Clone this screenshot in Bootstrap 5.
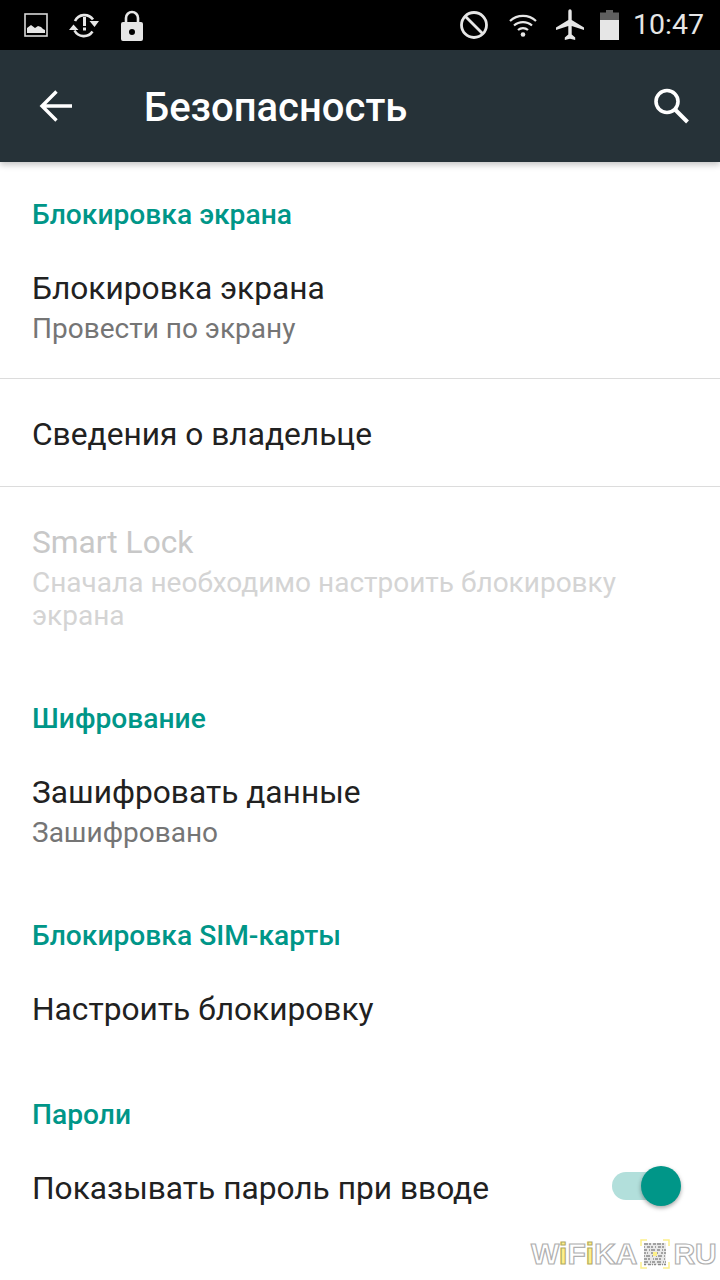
<!DOCTYPE html>
<html lang="ru">
<head>
    <meta charset="UTF-8">
    <title>Безопасность</title>
    <link href="https://cdn.jsdelivr.net/npm/bootstrap@5.3.0/dist/css/bootstrap.min.css" rel="stylesheet">
    <style>
        html, body { width: 720px; height: 1280px; overflow: hidden; background: #fff; }
        body { font-family: Roboto, "Liberation Sans", sans-serif; position: relative; }
        .status-strip { height: 50px; background: #000; color: #e6e6e6; }
        .status-time { font-size: 28.5px; line-height: 50px; margin-left: 14px; margin-right: 16px; }
        .app-strip { height: 112px; background: #263238; color: #fff; box-shadow: 0 3px 6px rgba(0,0,0,.22); position: relative; }
        .app-title { font-size: 40px; font-weight: 500; margin-left: 72px; line-height: 1; padding-top: 3px; }
        .sect-head { color: #009688; font-size: 28.2px; font-weight: 500; line-height: 32px; padding: 0 32px; }
        .pref-row { padding: 0 32px; }
        .pref-title { font-size: 31.7px; line-height: 40px; color: #212121; }
        .pref-sub { font-size: 28px; line-height: 33px; color: #757575; margin-top: 3px; }
        .pref-off .pref-title { color: #c8c8c8; }
        .pref-off .pref-sub { color: #d4d4d4; }
        .pref-line { border-top: 1px solid #dcdcdc; }
        .sw-wrap { position: relative; width: 69px; height: 40px; margin-right: 7px; top: -3px; }
        .sw-track { position: absolute; left: 0; top: 6px; width: 60px; height: 28px; border-radius: 14px; background: #b2dfdb; }
        .sw-thumb { position: absolute; right: 0; top: 0; width: 40px; height: 40px; border-radius: 50%; background: #009688; box-shadow: 0 2px 4px rgba(0,0,0,.35); }
        .wm-box { position: absolute; left: 531px; top: 1239px; display: flex; align-items: center; }
        .wm-text { font-family: "Liberation Sans", sans-serif; font-weight: 700; font-size: 30px; line-height: 30px; letter-spacing: 0; color: #fff; -webkit-text-stroke: 1.2px #b0b0b0; }
        .wm-text b { color: #fdf08a; -webkit-text-stroke: 1.2px #b5ad5f; font-weight: 700; }
    </style>
</head>
<body>
    <div class="status-strip d-flex align-items-center">
        <svg class="ms-4" style="margin-top:1px" width="25" height="25" viewBox="0 0 25 25">
            <rect x="1" y="1" width="22" height="22" fill="none" stroke="#d8d8d8" stroke-width="1.6"/>
            <path d="M3 20v-5l4-3 4 3 3-2 3 1 2 2 2 1v3z" fill="#e6e6e6"/>
        </svg>
        <svg style="margin-left:20px" width="32" height="28" viewBox="0 0 32 28">
            <path d="M6 10a10.500 10.500 0 0 1 18-1.500M5.500 19.500a10.500 10.500 0 0 0 18 1" fill="none" stroke="#e6e6e6" stroke-width="2.600"/>
            <path d="M20.500 10H30l-4.500 6zM9.500 19H0l4.500-5.500z" fill="#e6e6e6"/>
            <rect x="14" y="6" width="3" height="9" fill="#e6e6e6"/><rect x="14" y="16.500" width="3" height="3" fill="#e6e6e6"/>
        </svg>
        <svg style="margin-left:19px" width="24" height="31" viewBox="0 0 24 31">
            <path d="M6 13V8a6 6 0 0 1 12 0v5" fill="none" stroke="#e6e6e6" stroke-width="2.600"/>
            <path d="M3 12h18a2 2 0 0 1 2 2v15a2 2 0 0 1-2 2H3a2 2 0 0 1-2-2V14a2 2 0 0 1 2-2zm9 7a3 3 0 1 0 0 6 3 3 0 0 0 0-6z" fill="#e6e6e6" fill-rule="evenodd"/>
        </svg>
        <svg class="ms-auto" width="30" height="30" viewBox="0 0 30 30">
            <circle cx="15" cy="15" r="12.500" fill="none" stroke="#e6e6e6" stroke-width="2.800"/>
            <path d="M6.500 6.500l17 17" stroke="#e6e6e6" stroke-width="2.800"/>
        </svg>
        <svg style="margin-left:19px" width="30" height="24" viewBox="0 0 30 24">
            <path d="M2 8a19 19 0 0 1 26 0M6 12.500a13.500 13.500 0 0 1 18 0M10 17a7.500 7.500 0 0 1 10 0" fill="none" stroke="#e6e6e6" stroke-width="2.200"/>
            <circle cx="15" cy="21.500" r="2.300" fill="#e6e6e6"/>
        </svg>
        <svg style="margin-left:17px" width="30" height="32" viewBox="0 0 30 32">
            <path d="M13.300 2.500c0-3 3.400-3 3.400 0V11L29 18.500V21l-12.300-4v8.500l3.500 3V31L15 29.800 9.800 31v-2.500l3.500-3V17L1 21v-2.500L13.300 11z" fill="#e6e6e6"/>
        </svg>
        <svg style="margin-left:15px" width="19" height="30" viewBox="0 0 19 30">
            <path d="M6 0h7v2.500h6V10H0V2.500h6z" fill="#5f5f5f"/>
            <rect x="0" y="10" width="19" height="20" fill="#e6e6e6"/>
        </svg>
        <span class="status-time">10:47</span>
    </div>

    <div class="app-strip d-flex align-items-center">
        <svg style="margin-left:39px" width="33" height="32" viewBox="0 0 33 32">
            <path d="M33 16H3M17.500 1.500L3 16l14.500 14.500" fill="none" stroke="#fff" stroke-width="3.400"/>
        </svg>
        <span class="app-title">Безопасность</span>
        <svg class="ms-auto" style="margin-right:31px" width="36" height="36" viewBox="0 0 36 36">
            <circle cx="14" cy="13.500" r="11" fill="none" stroke="#fff" stroke-width="3.600"/>
            <path d="M22 21.500L34.500 34" stroke="#fff" stroke-width="4"/>
        </svg>
    </div>

    <div class="sect-head" style="margin-top:37px">Блокировка экрана</div>
    <div class="pref-row" style="padding-top:38px;padding-bottom:33px">
        <div class="pref-title">Блокировка экрана</div>
        <div class="pref-sub">Провести по экрану</div>
    </div>
    <div class="pref-line"></div>
    <div class="pref-row" style="padding-top:36px;padding-bottom:31px">
        <div class="pref-title">Сведения о владельце</div>
    </div>
    <div class="pref-line"></div>
    <div class="pref-row pref-off" style="padding-top:36px">
        <div class="pref-title">Smart Lock</div>
        <div class="pref-sub">Сначала необходимо настроить блокировку экрана</div>
    </div>

    <div class="sect-head" style="margin-top:71px">Шифрование</div>
    <div class="pref-row" style="padding-top:38px">
        <div class="pref-title">Зашифровать данные</div>
        <div class="pref-sub">Зашифровано</div>
    </div>

    <div class="sect-head" style="margin-top:71px">Блокировка SIM-карты</div>
    <div class="pref-row" style="padding-top:38px">
        <div class="pref-title">Настроить блокировку</div>
    </div>

    <div class="sect-head" style="margin-top:69px">Пароли</div>
    <div class="pref-row d-flex align-items-center justify-content-between" style="padding-top:38px;padding-right:32px">
        <div class="pref-title">Показывать пароль при вводе</div>
        <div class="sw-wrap"><div class="sw-track"></div><div class="sw-thumb"></div></div>
    </div>

    <div class="wm-box">
        <span class="wm-text">W<b>i</b>F<b>i</b>KA</span>
        <svg style="margin:0 3px 0 3px" width="30" height="30" viewBox="0 0 30 30">
            <path d="M1 7V1h6M23 1h6v6M29 23v6h-6M7 29H1v-6" fill="none" stroke="#fdf08a" stroke-width="1.500"/>
            <rect x="4" y="4" width="22" height="22" fill="#e8e8e8"/>
            <g fill="none" stroke="#8a8a8a" stroke-width="1.500">
                <path d="M4 5h22" stroke-dasharray="4 1 2 2 3 1"/>
                <path d="M4 8h22" stroke-dasharray="1 2 3 1 2 2"/>
                <path d="M4 11h22" stroke-dasharray="3 2 1 1 4 2"/>
                <path d="M4 14h22" stroke-dasharray="2 1 1 3 2 1"/>
                <path d="M4 17h22" stroke-dasharray="1 1 4 2 1 3"/>
                <path d="M4 20h22" stroke-dasharray="3 1 2 3 1 1"/>
                <path d="M4 23h22" stroke-dasharray="4 2 1 1 3 2"/>
                <path d="M4 25.500h22" stroke-dasharray="2 2 3 1 1 1"/>
            </g>
            <rect x="13" y="13" width="4" height="4" fill="#fdf08a"/>
        </svg>
        <span class="wm-text">RU</span>
    </div>
</body>
</html>
